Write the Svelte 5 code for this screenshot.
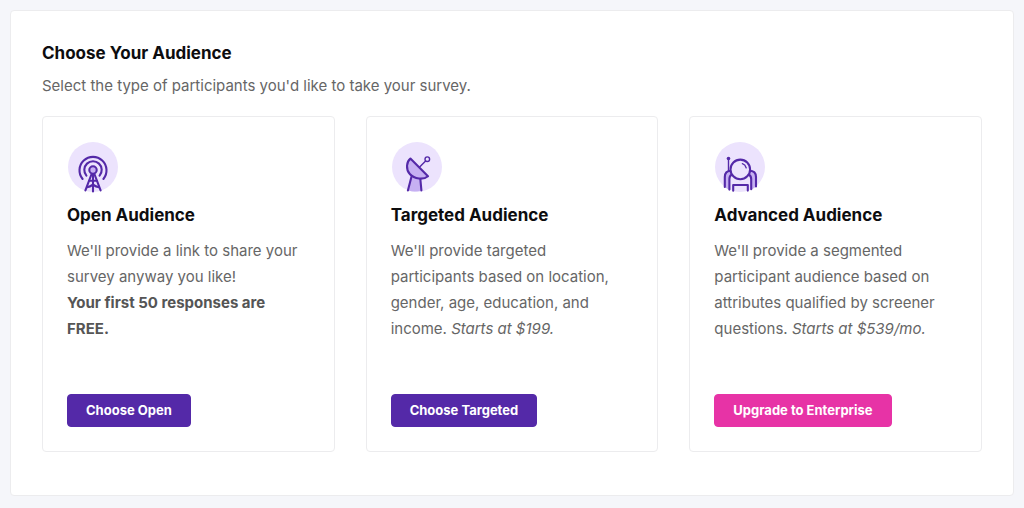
<script>
	/**
	 * Audience plans, in display order
	 * @type {{ icon: string, title: string, text: string, strong?: string, price?: string, action: string, highlight?: boolean }[]}
	 */
	const audiences = [
		{
			icon: 'tower',
			title: 'Open Audience',
			text: "We'll provide a link to share your survey anyway you like!",
			strong: 'Your first 50 responses are FREE.',
			action: 'Choose Open'
		},
		{
			icon: 'dish',
			title: 'Targeted Audience',
			text: "We'll provide targeted participants based on location, gender, age, education, and income.",
			price: 'Starts at $199.',
			action: 'Choose Targeted'
		},
		{
			icon: 'astronaut',
			title: 'Advanced Audience',
			text: "We'll provide a segmented participant audience based on attributes qualified by screener questions.",
			price: 'Starts at $539/mo.',
			action: 'Upgrade to Enterprise',
			highlight: true
		}
	];
</script>

<main class="panel">
	<h1 class="heading">Choose Your Audience</h1>
	<p class="intro">Select the type of participants you'd like to take your survey.</p>

	<div class="cards">
		{#each audiences as audience}
			<section class="card">
				<svg class="icon" viewBox="0 0 52 52" aria-hidden="true">
					<circle class="disc" cx="26" cy="26" r="25" />
					{#if audience.icon === 'tower'}
						<path d="M15.6 38A13.5 13.5 0 1 1 36.4 38" />
						<path d="M19.4 34.6A8.7 8.7 0 1 1 32.6 34.6" />
						<circle class="tint" cx="26" cy="29" r="3.7" />
						<path d="M24.6 33L18.4 49.4M27.4 33L33.6 49.4M26 33V50.4" />
						<path d="M22.3 39.7H29.7M20 46.2Q23 45.8 26 43.6Q29 45.8 32 46.2" />
					{:else if audience.icon === 'dish'}
						<path class="tint" d="M20.4 36L16.9 49.6Q23.5 51.5 30.4 49.6L29.3 37.6Z" stroke="none" />
						<path d="M20.4 36L16.9 49.4M29.3 37.6L30.4 49.4" />
						<path class="tint" d="M19.4 17.6L37 35.2C32.5 39 23.5 38.3 18.8 33C14.6 28.2 15.4 20.8 19.4 17.6Z" />
						<path class="thin" d="M28.4 26.2L34.6 19.9" />
						<circle class="thin" cx="36.3" cy="18.2" r="2.3" />
					{:else}
						<path class="tint" d="M17.3 29.8C13 29.8 10.8 32 10.8 36V46L15.4 49.3V37Z" stroke="none" />
						<path class="tint" d="M35.3 29.8C39.6 29.8 42 32 42 36V45.4L37.2 49.1V37Z" stroke="none" />
						<path d="M17.3 29.8C13 29.8 10.8 32 10.8 36V46M35.3 29.8C39.6 29.8 42 32 42 36V45.4" />
						<path d="M17.8 33.5Q15.4 34.8 15.4 38V48.6M34.8 33.5Q37.2 34.8 37.2 38V48.2" />
						<path d="M19.2 49.8V44H33.8V49.6" />
						<path class="thin" d="M14.5 17.6V29.8" />
						<circle class="knob" cx="14.5" cy="17.5" r="1.8" />
						<circle class="disc outlined" cx="26.3" cy="28.4" r="9.8" />
						<path class="thin" d="M28.4 22.6Q31.4 23.6 32.2 26.8" />
					{/if}
				</svg>
				<h2 class="heading">{audience.title}</h2>
				<p class="text">
					{audience.text}
					{#if audience.strong}
						<strong>{audience.strong}</strong>
					{/if}
					{#if audience.price}
						<em>{audience.price}</em>
					{/if}
				</p>
				<button type="button" class="action" class:highlight={audience.highlight}>
					{audience.action}
				</button>
			</section>
		{/each}
	</div>
</main>

<style>
	:global(body) {
		background: #f5f6fa;
		font-family: Inter, Lato, sans-serif;
	}
	.panel {
		margin: 10px;
		padding: 28px 31px 43px;
		background: #fff;
		border: 1px solid #ececee;
		border-radius: 4px;
	}
	.heading {
		margin: 0;
		color: #0d0d0f;
		font-size: 17px;
		font-weight: 700;
		line-height: 28px;
	}
	.intro {
		margin: 6px 0 17px;
		color: #666;
		font-size: 15px;
		line-height: 26px;
	}
	.cards {
		display: grid;
		grid-template-columns: repeat(3, 1fr);
		gap: 31px;
	}
	.card {
		display: flex;
		flex-direction: column;
		align-items: flex-start;
		padding: 24px;
		border: 1px solid #ececee;
		border-radius: 4px;
	}
	.icon {
		width: 52px;
		height: 52px;
		margin-bottom: 8px;
		fill: none;
		stroke: #5429a8;
		stroke-width: 2.1;
		stroke-linecap: round;
		stroke-linejoin: round;
	}
	.disc {
		fill: #ece3fd;
		stroke: none;
	}
	.outlined {
		stroke: #5429a8;
	}
	.tint {
		fill: #c6b0f2;
	}
	.thin {
		stroke-width: 1.4;
	}
	.knob {
		fill: #5429a8;
		stroke: none;
	}
	.text {
		margin: 9px 0 52px;
		color: #666;
		font-size: 15px;
		line-height: 26px;
	}
	.text strong {
		display: block;
		color: #555;
	}
	.action {
		margin-top: auto;
		padding: 0 18px;
		background: #5429a8;
		border: 1px solid #5429a8;
		border-radius: 4px;
		color: #fff;
		font-family: inherit;
		font-size: 13px;
		font-weight: 700;
		line-height: 31px;
		cursor: pointer;
	}
	.highlight {
		background: #e733a6;
		border-color: #e733a6;
	}
</style>
